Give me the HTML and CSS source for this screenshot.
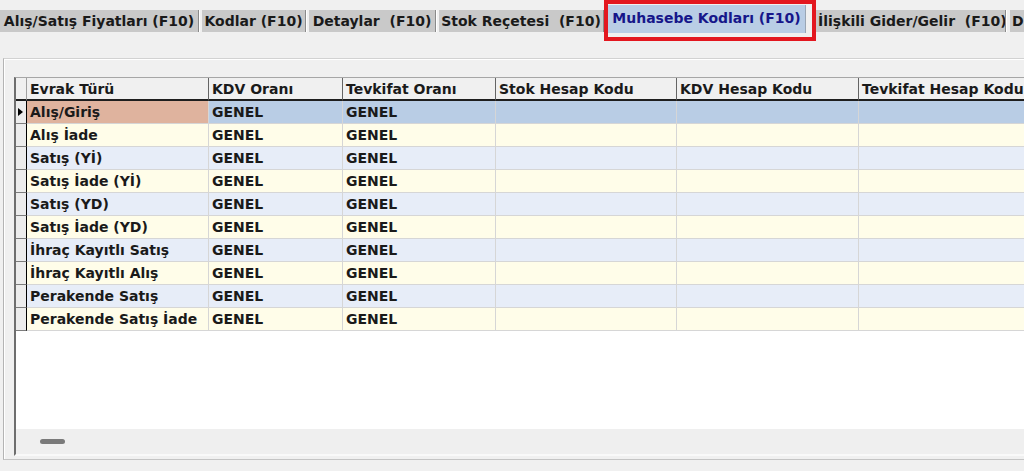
FILE: index.html
```html
<!DOCTYPE html>
<html lang="tr">
<head>
    <meta charset="UTF-8">
    <title>Muhasebe Kodları</title>
    <link rel="stylesheet" href="styles.css">
</head>
<body>
    <div class="tabs">
        <div class="tab t1">Alış/Satış Fiyatları (F10)</div>
        <div class="tab t2">Kodlar (F10)</div>
        <div class="tab t3">Detaylar&nbsp; (F10)</div>
        <div class="tab t4">Stok Reçetesi&nbsp; (F10)</div>
        <div class="mark">
            <div class="tab active">Muhasebe Kodları (F10)</div>
        </div>
        <div class="tab t6">İlişkili Gider/Gelir&nbsp; (F10)</div>
        <div class="tab t7">D</div>
    </div>

    <div class="panel">
        <div class="grid">
            <div class="row head">
                <div class="ind"></div>
                <div class="cell">Evrak Türü</div>
                <div class="cell">KDV Oranı</div>
                <div class="cell">Tevkifat Oranı</div>
                <div class="cell">Stok Hesap Kodu</div>
                <div class="cell">KDV Hesap Kodu</div>
                <div class="cell">Tevkifat Hesap Kodu</div>
            </div>
            <div id="rows"></div>
            <div class="blank"></div>
            <div class="hscroll"><span class="thumb"></span></div>
        </div>
    </div>

    <script>
        const types = [
            'Alış/Giriş', 'Alış İade', 'Satış (Yİ)', 'Satış İade (Yİ)', 'Satış (YD)',
            'Satış İade (YD)', 'İhraç Kayıtlı Satış', 'İhraç Kayıtlı Alış',
            'Perakende Satış', 'Perakende Satış İade'
        ];

        const rows = document.getElementById('rows');
        types.forEach((name, i) => {
            const row = document.createElement('div');
            row.className = 'row ' + (i === 0 ? 'selected' : (i % 2 ? 'even' : 'odd'));
            row.innerHTML = `
                <div class="ind">${i === 0 ? '<span class="arrow"></span>' : ''}</div>
                <div class="cell${i === 0 ? ' current' : ''}">${name}</div>
                <div class="cell">GENEL</div>
                <div class="cell">GENEL</div>
                <div class="cell"></div>
                <div class="cell"></div>
                <div class="cell"></div>
            `;
            rows.appendChild(row);
        });
    </script>
</body>
</html>
```

FILE: styles.css
```css
body {
    margin: 0;
    background-color: #f0f0f0;
    font-family: "DejaVu Sans", Verdana, sans-serif;
    font-size: 14px;
    font-weight: bold;
    color: #1a1a1a;
    overflow: hidden;
    height: 471px;
}

/* tab strip */
.tabs {
    display: flex;
    align-items: center;
    height: 41px;
    white-space: nowrap;
}
.tab {
    box-sizing: border-box;
    height: 22px;
    line-height: 22px;
    background-color: #c9c9c9;
    border-right: 1px solid #8a8a8a;
    box-shadow: 1px 0 0 #ffffff;
    text-align: center;
    overflow: hidden;
    flex-shrink: 0;
    margin-right: 3px;
}
.t1 { width: 199px; }
.t2 { width: 104px; }
.t3 { width: 127px; }
.t4 { width: 165px; margin-right: 0; }
.t6 { width: 190px; margin-right: 4px; text-align: left; text-indent: 2px; }
.t7 { width: 40px; text-align: left; text-indent: 2px; }

.mark {
    box-sizing: border-box;
    height: 41px;
    width: 212px;
    border: 4px solid #e3171f;
    padding: 1px 6px 0 0;
    flex-shrink: 0;
}
.tab.active {
    width: 198px;
    height: 28px;
    line-height: 27px;
    margin: 0;
    background-color: #b9cde5;
    color: #16168a;
    border-right: 1px solid #9aa6b4;
    box-shadow: none;
}

/* grid panel */
.panel {
    margin: 17px 0 0 3px;
    border-top: 1px solid #d2d2d2;
    border-left: 1px solid #b4b4b4;
    border-bottom: 1px solid #c4c4c4;
    box-shadow: inset 1px 1px 0 #ffffff;
    padding: 18px 0 3px 10px;
    overflow: hidden;
}
.grid {
    border-left: 2px solid #6e6e6e;
    border-top: 1px solid #a6a6a6;
    border-bottom: 2px solid #f9f9f9;
    width: 1043px;
}
.row {
    display: grid;
    grid-template-columns: 11px 182px 134px 153px 181px 182px 200px;
    height: 23px;
}
.cell {
    box-sizing: border-box;
    padding-left: 3px;
    line-height: 22px;
    border-right: 1px solid #d6d6d6;
    border-bottom: 1px solid #d6d6d6;
    white-space: nowrap;
    overflow: hidden;
}
.ind {
    box-sizing: border-box;
    background-color: #ececec;
    border-right: 1px solid #000000;
    border-bottom: 1px solid #7c7c7c;
    position: relative;
}
.arrow {
    position: absolute;
    left: 2px;
    top: 7px;
    border-left: 5px solid #000000;
    border-top: 4px solid transparent;
    border-bottom: 4px solid transparent;
}

.head .cell,
.head .ind {
    background-color: #f0f0f0;
    border-right: 1px solid #646464;
    border-bottom: 2px solid #1e1e1e;
}
.head .ind {
    border-right: 1px solid #a0a0a0;
}

.selected .cell { background-color: #b9cde5; }
.selected .cell.current { background-color: #dfb39e; }
.even .cell { background-color: #fffde9; }
.odd .cell { background-color: #e7edf8; }

.blank {
    height: 98px;
    background-color: #ffffff;
}
.hscroll {
    height: 25px;
    background-color: #efefef;
    position: relative;
}
.thumb {
    position: absolute;
    left: 24px;
    top: 10px;
    width: 25px;
    height: 5px;
    border-radius: 3px;
    background-color: #7a7a7a;
}
```
